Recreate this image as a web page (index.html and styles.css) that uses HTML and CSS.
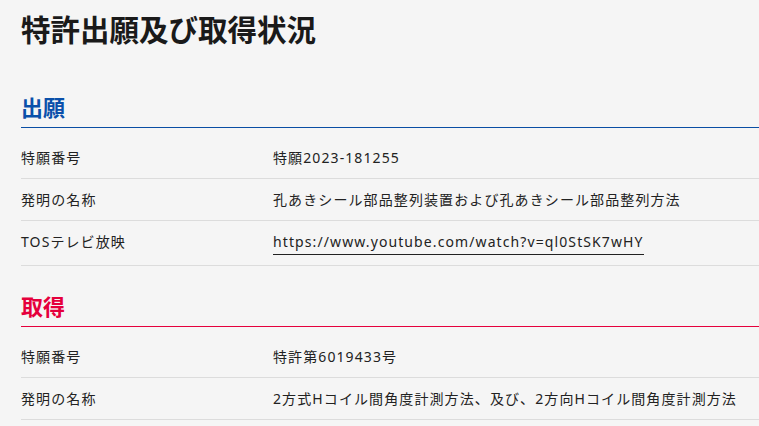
FILE: index.html
```html
<!DOCTYPE html>
<html lang="ja">
<head>
<meta charset="utf-8">
<title>特許出願及び取得状況</title>
<link rel="stylesheet" href="styles.css">
</head>
<body>
<main class="page">
  <h1 class="title">特許出願及び取得状況</h1>

  <section class="section section-apply">
    <h2 class="section-title">出願</h2>
    <dl class="table">
      <div class="row"><dt class="label">特願番号</dt><dd class="value">特願2023-181255</dd></div>
      <div class="row"><dt class="label">発明の名称</dt><dd class="value">孔あきシール部品整列装置および孔あきシール部品整列方法</dd></div>
      <div class="row"><dt class="label">TOSテレビ放映</dt><dd class="value"><a class="link" href="#">https://www.youtube.com/watch?v=ql0StSK7wHY</a></dd></div>
    </dl>
  </section>

  <section class="section section-get">
    <h2 class="section-title">取得</h2>
    <dl class="table">
      <div class="row"><dt class="label">特願番号</dt><dd class="value">特許第6019433号</dd></div>
      <div class="row"><dt class="label">発明の名称</dt><dd class="value">2方式Hコイル間角度計測方法、及び、2方向Hコイル間角度計測方法</dd></div>
    </dl>
  </section>
</main>
</body>
</html>
```

FILE: styles.css
```css
html, body {
  margin: 0;
  padding: 0;
  background: #f5f5f5;
}

body {
  font-family: "Noto Sans", "Noto Sans CJK JP", sans-serif;
  color: #222;
}

.page {
  padding: 8px 0 0 21px;
  overflow: hidden;
}

.title {
  margin: 0;
  font-size: 29.5px;
  line-height: 41px;
  font-weight: 700;
  color: #1a1a1a;
  font-family: "Noto Sans CJK JP", sans-serif;
}

.section {
  margin-top: 41px;
}

.section + .section {
  margin-top: 23px;
}

.section-title {
  margin: 0;
  font-size: 22px;
  line-height: 33px;
  font-weight: 700;
  padding-bottom: 4px;
  font-family: "Noto Sans CJK JP", sans-serif;
}

.section-apply .section-title {
  color: #0a50aa;
  border-bottom: 1px solid #0a4ea4;
}

.section-get .section-title {
  color: #e5003c;
  border-bottom: 1px solid #e5003c;
}

.table {
  margin: 9px 0 0;
}

.row {
  display: grid;
  grid-template-columns: 252px 1fr;
  border-bottom: 1px solid #dcdcdc;
  padding: 8px 0;
  font-size: 14px;
  letter-spacing: 1.1px;
  line-height: 25px;
}

.label, .value {
  margin: 0;
  white-space: nowrap;
}

.link {
  display: inline-block;
  color: #222;
  text-decoration: none;
  line-height: 22px;
  border-bottom: 1px solid #222;
  padding-bottom: 1px;
  margin-bottom: 1.5px;
}
```
